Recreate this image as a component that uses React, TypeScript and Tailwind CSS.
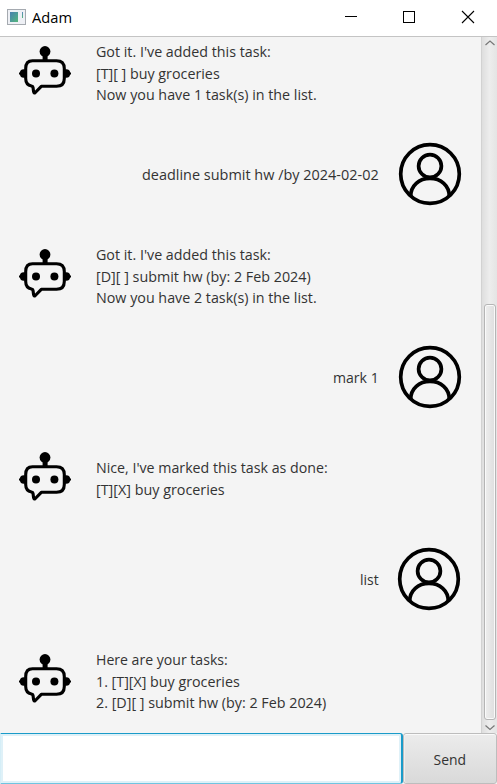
const FONT = "font-['Open_Sans','Noto_Sans',sans-serif]";

type Line = { text: string; width: number };
type Message = { from: 'bot' | 'user'; lines: Line[]; inset?: string };

const messages: Message[] = [
  { from: 'bot', lines: [
    { text: "Got it. I've added this task:", width: 175 },
    { text: '[T][ ] buy groceries', width: 124 },
    { text: 'Now you have 1 task(s) in the list.', width: 221 },
  ] },
  { from: 'user', lines: [{ text: 'deadline submit hw /by 2024-02-02', width: 237 }] },
  { from: 'bot', lines: [
    { text: "Got it. I've added this task:", width: 175 },
    { text: '[D][ ] submit hw (by: 2 Feb 2024)', width: 215 },
    { text: 'Now you have 2 task(s) in the list.', width: 221 },
  ] },
  { from: 'user', lines: [{ text: 'mark 1', width: 46 }] },
  { from: 'bot', lines: [
    { text: "Nice, I've marked this task as done:", width: 232 },
    { text: '[T][X] buy groceries', width: 129 },
  ] },
  { from: 'user', inset: 'gap-[18px] pr-5', lines: [{ text: 'list', width: 19 }] },
  { from: 'bot', lines: [
    { text: 'Here are your tasks:', width: 132 },
    { text: '1. [T][X] buy groceries', width: 144 },
    { text: '2. [D][ ] submit hw (by: 2 Feb 2024)', width: 230.5 },
  ] },
];

const BASELINES = [16, 38, 59];
const HEIGHTS = [21.3, 43, 64.5];

function MessageText({ lines }: { lines: Line[] }) {
  const width = Math.max(...lines.map((line) => line.width));
  return (
    <svg width={width} height={HEIGHTS[lines.length - 1]} className="block shrink-0 overflow-visible">
      {lines.map((line, i) => (
        <text
          key={i}
          x="0"
          y={BASELINES[i]}
          textLength={line.width - 0.3}
          lengthAdjust="spacingAndGlyphs"
          className="fill-[#333333] text-[14.5px]"
        >
          {line.text}
        </text>
      ))}
    </svg>
  );
}

function Robot() {
  return (
    <svg width="54" height="52" viewBox="0 0 54 52" className="mb-1 shrink-0">
      <circle cx="27" cy="6.5" r="5.4" />
      <path d="M24.600 8h5v7h-5z" />
      <ellipse cx="5.800" cy="28.500" rx="4" ry="4.200" />
      <ellipse cx="48.200" cy="28.500" rx="4" ry="4.200" />
      <path d="M1 27.500H53V29.500H1Z" />
      <path
        d="M14.500 15.700H38.500Q46.300 15.700 46.300 23.500V33.500Q46.300 41.300 38.500 41.300H23.300L17.300 47.500Q15.800 48.800 15.600 46.700L15 42.300Q14.800 41.300 13.500 41.100Q7.700 39.800 7.700 33.500V23.500Q7.700 15.700 14.500 15.700Z"
        fill="#f4f4f4" stroke="#000" strokeWidth="3.100" strokeLinejoin="round"
      />
      <circle cx="18" cy="28.600" r="4" />
      <circle cx="36.400" cy="28.600" r="4" />
    </svg>
  );
}

function Person() {
  return (
    <svg width="64" height="64" viewBox="0 0 64 64" className="mb-px shrink-0" fill="none" stroke="#000" strokeWidth="3.700">
      <circle cx="32" cy="32" r="29.300" />
      <circle cx="32" cy="24" r="11.400" />
      <path d="M12.700 54.500C12.500 43.500 21.300 36.300 32 36.300S51.500 43.500 51.300 54.500" />
    </svg>
  );
}

function MessageRow({ message }: { message: Message }) {
  if (message.from === 'user') {
    return (
      <div className={`flex h-[101.35px] shrink-0 items-center justify-end ${message.inset ?? 'gap-[19px] pr-[19px]'}`}>
        <MessageText lines={message.lines} />
        <Person />
      </div>
    );
  }
  return (
    <div className="flex h-[101.35px] shrink-0 items-center gap-6 pl-[18px]">
      <Robot />
      <MessageText lines={message.lines} />
    </div>
  );
}

function TitleBar() {
  return (
    <header className="flex h-[37px] shrink-0 items-center border-b border-[#c4c4c4] bg-white pl-[7px]">
      <div className="mb-[3px] h-4 w-[19px] border border-[#a5aab0] bg-[#eef0f5] p-[2px]">
        <div className="flex h-full">
          <div className="w-[8px] shrink-0 bg-gradient-to-br from-[#4a7fb0] to-[#55b578]" />
          <div className="ml-auto h-[6px] w-px bg-gradient-to-b from-[#5b86ba] to-[#55b578]" />
        </div>
      </div>
      <svg width="42" height="22" className="mb-[2px] ml-[6px]">
        <text x="0" y="17" textLength="40" lengthAdjust="spacingAndGlyphs" className="fill-black text-[14.5px]">Adam</text>
      </svg>
      <svg width="152" height="36" className="ml-auto" fill="none" stroke="#000" shapeRendering="crispEdges">
        <path d="M0 16.500H12M58.500 11.500H69.500V22.500H58.500Z" />
        <path d="M117 11L129 23M129 11L117 23" shapeRendering="auto" strokeWidth="1.100" />
      </svg>
    </header>
  );
}

function ScrollBar() {
  return (
    <div className="flex w-4 shrink-0 flex-col items-center border-l border-[#d2d2d2] bg-gradient-to-r from-[#dedede] via-[#ededed] to-[#e4e4e4]">
      <svg width="14" height="14" fill="none" stroke="#777" strokeWidth="1.200">
        <path d="M2.500 8L7 4L11.500 8" />
      </svg>
      <div className="mt-[253px] h-[416px] w-3 rounded-[3px] border border-[#b5b5b5] bg-gradient-to-r from-[#eeeeee] to-[#dedede] shadow-[inset_0_0_0_1px_#fafafa]" />
      <svg width="14" height="13" fill="none" stroke="#777" strokeWidth="1.200">
        <path d="M2.500 5.500L7 9.500L11.500 5.500" />
      </svg>
    </div>
  );
}

export default function App() {
  return (
    <div className={`flex h-[784px] w-[497px] flex-col overflow-hidden bg-[#f4f4f4] ${FONT}`}>
      <TitleBar />
      <div className="flex h-[696px] shrink-0">
        <main className="flex flex-1 flex-col justify-end overflow-hidden pb-[1px]">
          {messages.map((message, i) => <MessageRow key={i} message={message} />)}
        </main>
        <ScrollBar />
      </div>
      <footer className="flex h-[51px] shrink-0">
        <input
          aria-label="Message"
          className="h-full w-[403px] rounded-r-[3px] border border-r-2 border-[#1a9bc9] border-b-[#6fc4e0] border-l-[#d5eef7] bg-white px-2 text-[14.5px] shadow-[inset_0_0_0_2px_#dff1f8] outline-none"
        />
        <button className="flex h-full flex-1 items-center justify-center rounded-[3px] border border-[#bdbdbd] bg-gradient-to-b from-[#ececec] to-[#d9d9d9] shadow-[inset_0_1px_0_#fafafa,inset_1px_0_0_#efefef]">
          <svg width="34" height="22" className="overflow-visible">
            <text x="0.500" y="17" textLength="32.500" lengthAdjust="spacingAndGlyphs" className="fill-[#333333] text-[14.5px]">Send</text>
          </svg>
        </button>
      </footer>
    </div>
  );
}
